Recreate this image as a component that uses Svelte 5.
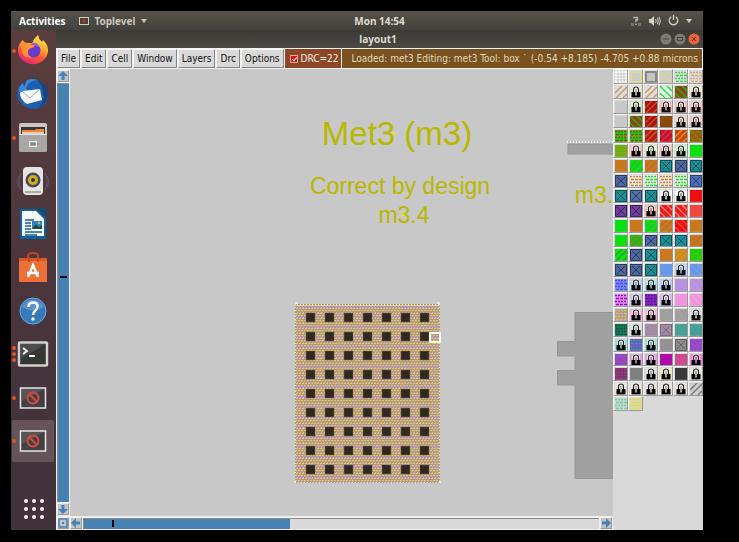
<script>
  const menus = ['File', 'Edit', 'Cell', 'Window', 'Layers', 'Drc', 'Options'];

  const apps = [
    { id: 'firefox', name: 'Firefox', dots: 1 },
    { id: 'mail', name: 'Thunderbird', dots: 0 },
    { id: 'files', name: 'Files', dots: 1 },
    { id: 'music', name: 'Rhythmbox', dots: 0 },
    { id: 'writer', name: 'Writer', dots: 0 },
    { id: 'software', name: 'Software', dots: 0 },
    { id: 'help', name: 'Help', dots: 0 },
    { id: 'terminal', name: 'Terminal', dots: 3 },
    { id: 'xapp', name: 'Console', dots: 1 },
    { id: 'xapp', name: 'Toplevel', dots: 1, active: true }
  ];

  // kind:fill:ink  s solid, o outline, g grid, u rising stripes, d falling stripes,
  // b bricks, x cross, l locked
  const layers = `
    g:#fff:#bbb o:#ccc:#e2de78 o:#c4c4c4:#777 d:#ccc:#ddd68a b:#ddd:#35d84a b:#ddd:#dba472
    u:#ddd:#d09458 l:#dfead0:#9a6 u:#ddd:#d09458 d:#e8f4e8:#18df38 d:#8b480c:#20b020 l:#f4e6c8:#a86
    s:#c8c8c8 l:#d0ecb8:#7a5 u:#a81414:#d04818 l:#f6c0c0:#c66 l:#f6c0c0:#c66 l:#f6c0c0:#c66
    s:#c8c8c8 d:#8b480c:#20b020 u:#a81414:#d04818 s:#8b4a08 l:#f4d4bc:#a76 l:#f6c0c0:#c66
    b:#08d818:#d02808 b:#08d818:#d02808 u:#b01c14:#d85818 u:#c01040:#d83818 u:#c44810:#e89018 d:#b05010:#38a810
    b:#48c010:#c88820 l:#f6c0c0:#c66 l:#e4f0c0:#8a5 l:#f6c0c0:#c66 l:#c4f4c4:#5a5 s:#08e010
    s:#c87820 u:#10dc18:#38b820 u:#c87820:#b87028 x:#1c8f92:#104c58 x:#5068a0:#283858 x:#1c8f92:#104c58
    x:#5068a0:#283858 b:#eee:#d08028 b:#eee:#18df20 b:#eee:#d08028 b:#eee:#18df20 x:#4c70b8:#284070
    x:#1c9098:#104c58 x:#5070a8:#283858 x:#1c9098:#104c58 l:#fff:#777 l:#fff:#777 s:#ee1010
    x:#70409c:#382058 x:#70409c:#382058 l:#f6b4b4:#d55 d:#f01818:#f88878 d:#f01818:#f88878 s:#f04840
    s:#08e010 s:#c87820 u:#10dc18:#20c828 u:#c87820:#b87020 d:#e81414:#f83838 s:#c87820
    s:#08e010 u:#38b018:#48a018 x:#5068a0:#283858 x:#1c8f92:#104c58 x:#1c9098:#104c70 u:#c87820:#b87030
    u:#10dc18:#20a820 x:#5068a0:#283858 x:#1c8f92:#104c58 s:#c87820 u:#d09020:#c88820 s:#28cc08
    x:#5068a0:#283858 x:#5068a0:#283858 x:#1c8f92:#104c58 s:#6898e8 l:#b4d0fa:#68c d:#6898e8:#78a0e0
    b:#9080ff:#2060f8 l:#b4d0fa:#68c l:#a8e4ec:#5aa l:#b4d0fa:#68c s:#b890e0 d:#b890e0:#c098d8
    b:#e890f8:#9010c8 l:#d4baf4:#97b b:#8828b8:#6010a0 l:#d4baf4:#97b s:#f094e0 d:#f094e0:#f8a0d0
    b:#b098a8:#d8c048 l:#fab4dc:#d79 l:#fab4dc:#d79 s:#a0a0a0 d:#a0a0a0:#aaa598 l:#ddd:#999
    b:#107858:#205040 l:#d0e4d8:#798 s:#a48ca4 x:#a48ca4:#806880 s:#48a098 d:#48a098:#509890
    l:#98e0e0:#499 b:#8050b8:#20a0b0 l:#98e0e0:#499 s:#929292 x:#8c8c8c:#606060 s:#9848c8
    d:#9c48c4:#8c4cb4 l:#e0a0e4:#a5a l:#e0a0e4:#a5a b:#b808b8:#a01090 s:#d04890 l:#f480dc:#d3a
    b:#882888:#805050 s:#808080 l:#ddd:#888 l:#ecebb0:#998 s:#383838 l:#e4e4d8:#888
    l:#ece2da:#998 l:#ece2da:#998 l:#ece2da:#998 l:#ece2da:#998 l:#ece2da:#998 u:#ccc:#777
    b:#c8d8d0:#70d0a8 b:#d8d8c8:#e8e020`
    .trim()
    .split(/\s+/)
    .map((entry) => {
      const [kind, fill, ink] = entry.split(':');
      return { kind, fill, ink };
    });

  const vias = Array.from({ length: 63 }, (_, i) => ({
    x: 306 + (i % 7) * 19,
    y: 313 + Math.floor(i / 7) * 19
  }));

  let drc = $state(true);
</script>

<div class="page">
  <div class="desktop">
    <header class="panel">
      <div class="left">
        <button class="activities">Activities</button>
        <button class="toplevel">
          <svg width="10" height="8" viewBox="0 0 10 8" aria-hidden="true">
            <rect x=".5" y=".5" width="9" height="7" fill="#443" stroke="#d0cdc8" />
            <circle cx="5" cy="4" r="2" fill="#a33" />
          </svg>
          Toplevel
          <svg width="6" height="4" aria-hidden="true"><path d="M0 0h6L3 4z" fill="#c9c6bf" /></svg>
        </button>
      </div>
      <time>Mon 14:54</time>
      <div class="tray">
        <svg width="12" height="12" viewBox="0 0 12 12" aria-hidden="true">
          <path d="M1 8h3v3H1zM8 8h3v3H8z" fill="#77746e" />
          <path d="M4 3.500V2.500h3.500V5H6v2M6 8.500V10" fill="none" stroke="#b9b6b0" stroke-width="1.500" />
        </svg>
        <svg width="12" height="10" viewBox="0 0 12 10" fill="none" stroke="#d5d2cc" aria-hidden="true">
          <path d="M0 3h2l3-3v10L2 7H0z" fill="#d5d2cc" stroke="none" />
          <path d="M6.500 3q1.400 2 0 4M8.300 1.800q2.200 3.200 0 6.400M10 .8q2.800 4.200 0 8.400" />
        </svg>
        <svg width="11" height="11" viewBox="0 0 11 11" fill="none" stroke="#d5d2cc" stroke-width="1.300" aria-hidden="true">
          <path d="M3.200 1.800a4.300 4.300 0 1 0 4.600 0M5.500 0v5" />
        </svg>
        <svg width="6" height="4" aria-hidden="true"><path d="M0 0h6L3 4z" fill="#d5d2cc" /></svg>
      </div>
    </header>

    <div class="body">
      <nav class="dock">
        <div class="apps">
          {#each apps as app}
            <button class="app" class:active={app.active} aria-label={app.name}>
              <span class="marks">{#each Array(app.dots) as _}<i></i>{/each}</span>
              <svg width="32" height="32" viewBox="0 0 32 32" aria-hidden="true">
                {#if app.id === 'firefox'}
                  <defs>
                    <linearGradient id="fx" x1=".8" y1="0" x2=".3" y2="1">
                      <stop offset="0" stop-color="#fff04a" /><stop offset=".35" stop-color="#ffb02c" />
                      <stop offset=".65" stop-color="#ff5a30" /><stop offset="1" stop-color="#e8207c" />
                    </linearGradient>
                  </defs>
                  <path d="M5.500 5Q7 6 8 8q2-.7 4 0l3 .3Q17 3 21 0q.5 4 4 7l1-2q5.500 5 5 12A15.300 15.300 0 0 1 1 17Q.500 10 5.500 5z" fill="url(#fx)" />
                  <circle cx="16.500" cy="15.500" r="7" fill="#6b3bd0" />
                  <path d="M3 9q5-3 9 0l6 1q-1 3-4 3-2 0-3 3-1 5 4 6-7 2-9-3Q4 15 3 9z" fill="#ff9130" />
                  <path d="M15 8q6-1 8 5-2-2-5-2z" fill="#9758e8" />
                {:else if app.id === 'mail'}
                  <path d="M10 2q10-3 16 4 6 6 5 13-2 11-14 12Q3 30 0 18 0 8 6 5l1 4z" fill="#1d5eae" />
                  <path d="M10 2q5-2 10 0-9 1-11 8 2 2-1 10l-6-6Q1 9 6 5l1 4z" fill="#348cd9" />
                  <path d="M20 2q12 5 11 16-2 9-10 12 8-8 5-17-1-7-6-11z" fill="#174480" />
                  <path d="M3 15l3-2 17-2 2 11-15 4q-7-4-7-11z" fill="#f5f7fb" />
                  <path d="M5 13l8 7 10-9" fill="none" stroke="#a8afbd" />
                {:else if app.id === 'files'}
                  <rect x="2" y="1" width="28" height="29" rx="2" fill="#c9c7c4" />
                  <path d="M4 5h24v8H4z" fill="#3b3430" />
                  <path d="M5 8h13l1-1h8v3H5z" fill="#f08437" /><path d="M5 10h22v2H5z" fill="#e4cdb7" />
                  <path d="M2 12h28v16q0 2-2 2H4q-2 0-2-2z" fill="#a9a7a5" />
                  <path d="M2 12.500h28" stroke="#e6e4e0" />
                  <rect x="12.500" y="19.500" width="7" height="5" fill="#aaa" stroke="#f4f4f4" />
                  <path d="M14 22h4" stroke="#555" />
                {:else if app.id === 'music'}
                  <path d="M4 8q-4 8 0 17M1.500 11q-2 6 0 11M28 8q4 8 0 17M30.500 11q2 6 0 11" fill="none" stroke="#5e5569" />
                  <rect x="6" y="2" width="20" height="28" rx="4" fill="#e4e4e2" />
                  <circle cx="16" cy="15" r="7.500" fill="#474d50" /><circle cx="16" cy="15" r="5" fill="#d4ae22" />
                  <circle cx="16" cy="15" r="2" fill="#30363c" /><path d="M8 27h16" stroke="#aaa" stroke-width="2" />
                {:else if app.id === 'writer'}
                  <path d="M3 1h17l9 9v21H3z" fill="#0f639c" /><path d="M5 3h14l8 8v17H5z" fill="#f6f8fa" />
                  <path d="M20 0h9v9z" fill="#134976" />
                  <path d="M8 12h9M8 15h6M8 18h6M8 21h6M8 24h17M8 27h12" stroke="#155d8c" stroke-width="1.500" />
                  <path d="M15 13h10v8H15z" fill="#2e88bf" /><path d="M15 21l4-5 3 3 3-2v4z" fill="#204e38" /><circle cx="22" cy="15" r="1" fill="#ffc642" />
                {:else if app.id === 'software'}
                  <path d="M11 9V4q0-3 5-3t5 3v5" fill="none" stroke="#bf4620" stroke-width="2" />
                  <path d="M2 6h28v24H2z" fill="#ed7036" /><path d="M2 6h28v3H2z" fill="#d95827" />
                  <path d="M12 10V5M21 10V5" stroke="#c34720" stroke-width="2" />
                  <path d="M11 25l5-12 5 12M10 21h12" fill="none" stroke="#fff" stroke-width="2.500" />
                {:else if app.id === 'help'}
                  <circle cx="16" cy="16" r="13" fill="#3778b9" stroke="#6eaadd" />
                  <path d="M5 12a12 12 0 0 1 22 0q-11 7-22 0z" fill="#5794cc" />
                  <path d="M11.500 12q0-4.500 4.500-4.500t4.500 4q0 2.500-2.500 4.500-2 1.500-2 4" fill="none" stroke="#fff" stroke-width="2.500" />
                  <circle cx="16" cy="24" r="1.700" fill="#fff" />
                {:else if app.id === 'terminal'}
                  <rect x="2" y="4.500" width="28" height="23" rx="1" fill="#343635" stroke="#d1d1cd" stroke-width="2.500" />
                  <path d="M3.500 6h25L3.500 21z" fill="#4b4d4c" />
                  <path d="M6 10l4 3-4 3M12 18h6" fill="none" stroke="#fff" stroke-width="1.800" />
                {:else}
                  <rect x="3.500" y="6" width="25" height="20" fill="#414141" stroke="#e8e5e8" stroke-width="1.500" />
                  <path d="M5 7h22L5 19z" fill="#555" />
                  <circle cx="16" cy="16" r="5.500" fill="none" stroke="#d44848" stroke-width="2" />
                  <path d="M12 12l8 8" stroke="#d44848" stroke-width="2" />
                {/if}
              </svg>
            </button>
          {/each}
        </div>
        <button class="grid" aria-label="Show Applications">
          {#each Array(9) as _}<i></i>{/each}
        </button>
      </nav>

      <main class="window">
        <div class="titlebar">
          <h1>layout1</h1>
          <div class="controls">
            <button aria-label="Minimize"><svg width="12" height="12" aria-hidden="true"><circle cx="6" cy="6" r="5.500" fill="#7d7b75" /><path d="M3 6h6" stroke="#44423e" /></svg></button>
            <button aria-label="Maximize"><svg width="12" height="12" aria-hidden="true"><circle cx="6" cy="6" r="5.500" fill="#7d7b75" /><path d="M3.500 4.500h5v3h-5z" fill="none" stroke="#44423e" /></svg></button>
            <button aria-label="Close"><svg width="12" height="12" aria-hidden="true"><circle cx="6" cy="6" r="5.500" fill="#ee6238" /><path d="M4 4l4 4M8 4l-4 4" stroke="#70321f" /></svg></button>
          </div>
        </div>

        <div class="menubar">
          {#each menus as menu}<button class="menu">{menu}</button>{/each}
          <label class="drc"><input type="checkbox" bind:checked={drc} />DRC=22</label>
          <div class="status">
            <span>Loaded: met3 Editing: met3 Tool: box ˙</span>
            <span>(-0.54 +8.185) -4.705 +0.88 microns</span>
          </div>
        </div>

        <div class="work">
          <div class="view">
            <div class="row">
              <div class="vbar">
                <button class="arrow" aria-label="Scroll up"><svg viewBox="0 0 10 10" aria-hidden="true"><path d="M5 0l5 5H6.500v4h-3V5H0z" /></svg></button>
                <div class="vtrough"><span class="vtick"></span></div>
                <button class="arrow" aria-label="Scroll down"><svg viewBox="0 0 10 10" aria-hidden="true"><path d="M5 10l5-5H6.500V1h-3v4H0z" /></svg></button>
              </div>
              <div class="canvas">
                <svg class="drawing" aria-label="Layout drawing">
                  <defs>
                    <pattern id="mesh" x="1" width="3" height="5" patternUnits="userSpaceOnUse">
                      <rect width="3" height="5" fill="#b090aa" />
                      <path d="M0 0h2v1H0zM1 3h2v1H1z" fill="#ddd03c" />
                      <path d="M2 0h1v1H2zM0 3h1v1H0z" fill="#b89a90" />
                      <path d="M0 1h2v1H0z" fill="#b89c90" />
                      <path d="M2 2h1v1H2z" fill="#ccb4b8" />
                    </pattern>
                    <pattern id="hem" width="3" height="3" patternUnits="userSpaceOnUse">
                      <path d="M0 0h1v3H0z" fill="#f0eeea" />
                    </pattern>
                  </defs>
                  <g transform="translate(-70 -69)">
                    <g class="label">
                      <text x="397" y="145" class="big">Met3 (m3)</text>
                      <text x="400" y="194">Correct by design</text>
                      <text x="404" y="223">m3.4</text>
                      <text x="594" y="203">m3.</text>
                    </g>
                    <path d="M392 133h4M394 131v4M401 215h4M403 213v4M396 185h3M596 195h4M598 193v4" stroke="#eef000" />
                    <rect x="295" y="304" width="145" height="179" fill="url(#mesh)" />
                    <path d="M295 304h145v2H295z" fill="url(#hem)" />
                    <path d="M295.500 304v179M439.500 304v179M295 482.500h145" stroke="#e4dcc0" stroke-dasharray="1 2" />
                    <path d="M295 302h3v2h-3zM437 302h3v2h-3zM294 481h2v2h-2zM439 481h2v2h-2z" fill="#e8e8e8" />
                    {#each vias as via}
                      <rect x={via.x} y={via.y} width="9" height="9" fill="#30291f" stroke="#776a50" stroke-opacity=".5" />
                    {/each}
                    <rect x="430" y="333" width="10" height="9" fill="url(#mesh)" stroke="#fff" stroke-width="2" />
                    <path d="M568 144h400v10H568z" fill="#a0a0a0" stroke="#969696" />
                    <path d="M567 141h400v2H567z" fill="url(#hem)" />
                    <path d="M575 312.500h400v166H575V385h-17.500v-14.500H575V356h-17.500v-14.500H575z" fill="#a0a0a0" stroke="#969696" />
                  </g>
                </svg>
              </div>
            </div>
            <div class="hbar">
              <button class="arrow" aria-label="Zoom"><svg viewBox="0 0 10 10" aria-hidden="true"><path d="M1 1h8v8H1z" fill="none" stroke="#4682b4" stroke-width="1.500" /><path d="M4 4h2v2H4z" /></svg></button>
              <button class="arrow" aria-label="Scroll left"><svg viewBox="0 0 10 10" aria-hidden="true"><path d="M0 5l5-5v3.500h4v3H5V10z" /></svg></button>
              <div class="htrough"><div class="hthumb"><span class="htick"></span></div></div>
              <button class="arrow" aria-label="Scroll right"><svg viewBox="0 0 10 10" aria-hidden="true"><path d="M10 5L5 0v3.500H1v3h4V10z" /></svg></button>
            </div>
          </div>

          <aside class="side">
            <div class="palette">
              {#each layers as layer, i}
                <button class="layer" aria-label={`Layer ${i + 1}`}>
                  <svg viewBox="0 0 12 12" preserveAspectRatio="none" aria-hidden="true">
                    <rect width="12" height="12" fill={layer.fill} />
                    {#if layer.kind === 'o'}
                      <path d="M1 1h10v10H1z" fill="none" stroke={layer.ink} stroke-width="1.500" />
                    {:else if layer.kind === 'g'}
                      <path d="M3 0v12M6 0v12M9 0v12M0 3h12M0 6h12M0 9h12" stroke={layer.ink} stroke-width=".8" />
                    {:else if layer.kind === 'u'}
                      <path d="M0 7l7-7M1 12L12 1M8 12l4-4" stroke={layer.ink} stroke-width="1.400" />
                    {:else if layer.kind === 'd'}
                      <path d="M7 0l5 5M0 0l12 12M0 7l5 5" stroke={layer.ink} stroke-width="1.400" />
                    {:else if layer.kind === 'b'}
                      <path d="M0 1.500h12M0 7.500h12" stroke={layer.ink} stroke-width="1.500" stroke-dasharray="2 1" />
                      <path d="M1 4.500h12M1 10.500h12" stroke={layer.ink} stroke-width="1.500" stroke-dasharray="3 1" />
                    {:else if layer.kind === 'x'}
                      <path d="M.5.500h11v11H.5zM2 2l8 8M10 2l-8 8" fill="none" stroke={layer.ink} />
                    {:else if layer.kind === 'l'}
                      <path d="M3.500 6V3.500Q3.500 1 6 1t2.500 2.500V6" fill="#fff" stroke="#fff" stroke-width="2.500" />
                      <path d="M3.500 6V3.500Q3.500 1 6 1t2.500 2.500V6" fill="#fff" stroke="#222" stroke-width="1.200" />
                      <path d="M1.500 6h9v5.500h-9z" fill="#000" />
                      <path d="M6 6v3.500" stroke={layer.fill} stroke-width="1.400" />
                      <path d="M6 3v3" stroke={layer.ink} stroke-width="1.400" />
                    {/if}
                  </svg>
                </button>
              {/each}
            </div>
          </aside>
        </div>
      </main>
    </div>
  </div>
</div>

<style>
  :global(body) { margin: 0; background: #000; }
  * { box-sizing: border-box; }
  button { font: inherit; color: inherit; background: none; border: 0; padding: 0; margin: 0; }
  svg { display: block; flex: none; }
  .page { display: flex; min-height: 100vh; padding: 11px 36px 12px 11px; background: #000; font: 10px/14px "DejaVu Sans Condensed", "DejaVu Sans", sans-serif; }
  .desktop { flex: 1; min-width: 0; display: flex; flex-direction: column; }
  .panel { display: grid; grid-template-columns: 1fr auto 1fr; align-items: center; height: 19px; padding: 0 11px 0 56px; background: linear-gradient(#54524a, #42413c); color: #dfdbd2; font: bold 10px/14px "Noto Sans", sans-serif; }
  .left { display: flex; gap: 14px; margin-left: -48px; }
  .activities { color: #fff; }
  .toplevel { display: flex; align-items: center; gap: 5px; color: #cbc7be; }
  .tray { display: flex; justify-content: flex-end; align-items: center; gap: 7px; }
  .body { flex: 1; display: flex; min-height: 0; }
  .dock { width: 45px; display: flex; flex-direction: column; align-items: center; background: linear-gradient(#5a3d3e, #49353c 55%, #40313a); }
  .apps { display: flex; flex-direction: column; justify-content: space-between; height: 432px; width: 100%; }
  .app { position: relative; display: flex; align-items: center; justify-content: center; width: 42px; height: 42px; margin-left: 1px; border-radius: 2px; }
  .app.active { background: #67535a; }
  .marks { position: absolute; left: 0; top: 0; bottom: 0; display: flex; flex-direction: column; justify-content: center; gap: 2px; }
  .marks i { width: 4px; height: 4px; border-radius: 50%; background: #e95420; }
  .grid { display: grid; grid-template-columns: repeat(3, 4px); gap: 4px; margin: auto 0 11px; }
  .grid i { width: 4px; height: 4px; border-radius: 50%; background: #f4f0f2; }

  .window { flex: 1; min-width: 0; display: flex; flex-direction: column; background: #d9d9d9; }
  .titlebar { display: grid; grid-template-columns: 1fr auto 1fr; align-items: center; height: 18px; padding-right: 3px; background: linear-gradient(#3b3a36, #4a4943); color: #dfdbd2; }
  h1 { grid-column: 2; margin: 0; font: bold 10px/14px "Noto Sans", sans-serif; }
  .controls { display: flex; justify-content: flex-end; gap: 2px; }
  .menubar { display: flex; height: 21px; padding: 1px; gap: 1px; background: #f2f2f2; color: #111; }
  .menu { padding: 0 3px; background: #d9d9d9; border: 1px solid #f6f6f6; border-right-color: #868686; border-bottom-color: #868686; }
  .drc { display: flex; align-items: center; gap: 3px; padding: 0 2px 0 5px; background: #8b4726; color: #f4ece6; }
  .drc input { appearance: none; position: relative; width: 8px; height: 8px; margin: 0; background: #e01010; border: 1px solid #f0a090; }
  .drc input:checked::after { content: ""; position: absolute; left: 2px; top: 0; width: 2px; height: 4px; border: solid #fff; border-width: 0 1px 1px 0; transform: rotate(40deg); }
  .status { flex: 1; display: flex; align-items: center; justify-content: space-between; padding: 0 4px 0 10px; background: #7a5220; color: #e0d8b8; white-space: nowrap; }

  .work { flex: 1; display: flex; min-height: 0; }
  .view { flex: 1; min-width: 0; display: flex; flex-direction: column; }
  .row { flex: 1; display: flex; min-height: 0; }
  .vbar { width: 14px; display: flex; flex-direction: column; padding: 1px; background: #eee; }
  .vtrough { flex: 1; display: grid; grid-template-rows: 46% auto; justify-content: center; background: #4682b4; border: 1px solid #8a8a8a; border-width: 1px 0 0 1px; margin: 1px 0; }
  .vtick { grid-row: 2; width: 7px; height: 2px; background: #000; }
  .arrow { width: 12px; height: 12px; padding: 0; background: #c3c3c3; border: 1px solid #eee; border-right-color: #999; border-bottom-color: #999; flex: none; }
  .arrow svg { width: 100%; height: 100%; fill: #4682b4; }
  .canvas { flex: 1; min-width: 0; background: #c8c8c8; }
  .drawing { width: 100%; height: 100%; }
  .label { font: 23px "Liberation Sans", sans-serif; fill: #b8b800; text-anchor: middle; }
  .big { font-size: 33px; }
  .hbar { display: flex; align-items: center; height: 14px; gap: 1px; padding: 1px; background: #eee; }
  .htrough { flex: 1; height: 11px; background: #d9d9d9; border: 1px solid #8a8a8a; border-width: 1px 0 0 1px; }
  .hthumb { width: 40%; height: 100%; background: #4682b4; display: flex; align-items: center; padding-left: 28px; }
  .htick { width: 2px; height: 7px; background: #000; }

  .side { width: 90px; background: #d9d9d9; }
  .palette { display: grid; grid-template-columns: repeat(6, 1fr); grid-template-rows: repeat(23, 1fr); height: 342px; }
  .layer { min-height: 0; min-width: 0; background: #d9d9d9; border: 1px solid #f4f4f4; border-right-color: #999; border-bottom-color: #999; padding: 1px 0 0 1px; }
  .layer svg { width: 100%; height: 100%; }
</style>
